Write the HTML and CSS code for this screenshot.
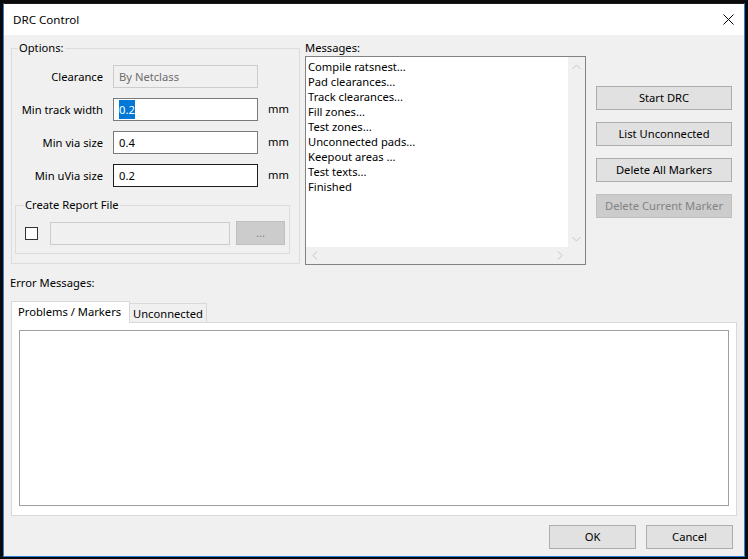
FILE: index.html
```html
<!DOCTYPE html>
<html lang="en">
<head>
    <meta charset="UTF-8">
    <title>DRC Control</title>
    <link rel="stylesheet" href="styles.css">
</head>
<body>
    <div class="window">
        <div class="titlebar">
            <span class="title">DRC Control</span>
            <svg class="close" width="11" height="11" viewBox="0 0 11 11">
                <path d="M0.5 0.5 L10.5 10.5 M10.5 0.5 L0.5 10.5" stroke="#000" stroke-width="1"/>
            </svg>
        </div>

        <div class="content">
            <div class="top">
                <!-- options box -->
                <fieldset class="group options">
                    <legend>Options:</legend>
                    <div class="opt-grid">
                        <div class="lbl">Clearance</div>
                        <div class="field disabled">By Netclass</div>
                        <div></div>

                        <div class="lbl">Min track width</div>
                        <div class="field"><span class="sel">0.2</span></div>
                        <div class="unit">mm</div>

                        <div class="lbl">Min via size</div>
                        <div class="field">0.4</div>
                        <div class="unit">mm</div>

                        <div class="lbl">Min uVia size</div>
                        <div class="field focus">0.2</div>
                        <div class="unit">mm</div>
                    </div>

                    <fieldset class="group report">
                        <legend>Create Report File</legend>
                        <div class="report-row">
                            <div class="check"></div>
                            <div class="field disabled path"></div>
                            <div class="btn disabled browse">...</div>
                        </div>
                    </fieldset>
                </fieldset>

                <!-- messages list -->
                <div class="messages">
                    <div class="msg-label">Messages:</div>
                    <div class="listbox">
                        <div class="list-main">
                            <div class="lines">
                                <div>Compile ratsnest...</div>
                                <div>Pad clearances...</div>
                                <div>Track clearances...</div>
                                <div>Fill zones...</div>
                                <div>Test zones...</div>
                                <div>Unconnected pads...</div>
                                <div>Keepout areas ...</div>
                                <div>Test texts...</div>
                                <div>Finished</div>
                            </div>
                            <div class="vscroll">
                                <svg width="9" height="6" viewBox="0 0 9 6"><path d="M0.5 5 L4.5 1 L8.5 5" fill="none" stroke="#c4c4c4"/></svg>
                                <svg width="9" height="6" viewBox="0 0 9 6"><path d="M0.5 1 L4.5 5 L8.5 1" fill="none" stroke="#c4c4c4"/></svg>
                            </div>
                        </div>
                        <div class="hscroll">
                            <svg width="6" height="9" viewBox="0 0 6 9"><path d="M5 0.5 L1 4.5 L5 8.5" fill="none" stroke="#c4c4c4"/></svg>
                            <svg width="6" height="9" viewBox="0 0 6 9"><path d="M1 0.5 L5 4.5 L1 8.5" fill="none" stroke="#c4c4c4"/></svg>
                            <div class="corner"></div>
                        </div>
                    </div>
                </div>

                <div class="actions">
                    <div class="btn">Start DRC</div>
                    <div class="btn">List Unconnected</div>
                    <div class="btn">Delete All Markers</div>
                    <div class="btn disabled">Delete Current Marker</div>
                </div>
            </div>

            <div class="err-label">Error Messages:</div>

            <div class="tabs">
                <div class="tab active">Problems / Markers</div>
                <div class="tab">Unconnected</div>
            </div>
            <div class="tab-panel">
                <div class="marker-list"></div>
            </div>

            <div class="footer">
                <div class="btn dlg">OK</div>
                <div class="btn dlg">Cancel</div>
            </div>
        </div>
    </div>
</body>
</html>
```
FILE: styles.css
```css
body {
    margin: 0;
    padding: 3px 0 0 3px;
    background-color: #0a0a0a;
    font-family: "Noto Sans", sans-serif;
    font-size: 11.2px;
    color: #000;
}

.window {
    width: 742px;
    height: 554px;
    box-sizing: border-box;
    border: 1px solid #2a7fd6;
    border-top-color: #1a1a1a;
    display: flex;
    flex-direction: column;
    background-color: #f0f0f0;
}

.titlebar {
    height: 31px;
    background-color: #fff;
    display: flex;
    align-items: center;
    justify-content: space-between;
    padding-left: 9px;
    flex-shrink: 0;
}

.title {
    font-size: 11.6px;
}

.close {
    margin-right: 10px;
}

.content {
    flex: 1;
    padding: 6px 7px 0 7px;
    display: flex;
    flex-direction: column;
}

.top {
    display: flex;
    align-items: flex-start;
}

/* group boxes */
.group {
    margin: 0;
    padding: 0;
    border: 1px solid #dcdcdc;
    box-sizing: border-box;
}

.group legend {
    padding: 0 1px;
    line-height: 14px;
}

.options {
    width: 289px;
}

.options > legend {
    margin-left: 6px;
}

.opt-grid {
    display: grid;
    grid-template-columns: 91px 145px auto;
    grid-auto-rows: 23px;
    column-gap: 10px;
    row-gap: 10px;
    margin-top: 10px;
}

.lbl {
    text-align: right;
    align-self: center;
}

.unit {
    align-self: start;
    margin-top: 3px;
}

.field {
    box-sizing: border-box;
    height: 23px;
    border: 1px solid #7a7a7a;
    background-color: #fff;
    padding: 0 5px;
    line-height: 21px;
}

.field.disabled {
    background-color: #f0f0f0;
    border-color: #cccccc;
    color: #6d6d6d;
}

.field.focus {
    border-color: #1e1e1e;
}

.sel {
    background-color: #0078d7;
    color: #fff;
    padding: 2px 0;
}

.report {
    margin: 11px 9px 9px 3px;
}

.report > legend {
    margin-left: 8px;
}

.report-row {
    display: flex;
    align-items: center;
    height: 24px;
    padding: 9px 0 8px 9px;
}

.check {
    width: 13px;
    height: 13px;
    box-sizing: border-box;
    border: 1px solid #333;
    background-color: #fff;
}

.path {
    width: 180px;
    margin-left: 12px;
}

.browse {
    width: 49px;
    margin-left: 6px;
    align-self: flex-start;
}

/* messages */
.messages {
    margin-left: 5px;
}

.msg-label {
    line-height: 14px;
    margin-bottom: 1px;
}

.listbox {
    width: 281px;
    height: 209px;
    box-sizing: border-box;
    border: 1px solid #828282;
    background-color: #fff;
    display: flex;
    flex-direction: column;
}

.list-main {
    flex: 1;
    display: flex;
}

.lines {
    flex: 1;
    padding: 2px 2px;
    line-height: 15px;
}

.vscroll {
    width: 17px;
    background-color: #f0f0f0;
    display: flex;
    flex-direction: column;
    justify-content: space-between;
    align-items: center;
    padding: 7px 0 5px;
}

.hscroll {
    height: 17px;
    background-color: #f0f0f0;
    display: flex;
    align-items: center;
    justify-content: space-between;
    padding-left: 6px;
}

.hscroll .corner {
    width: 17px;
    height: 17px;
    margin-left: 0;
}

.hscroll svg:nth-child(2) {
    margin-left: auto;
    margin-right: 5px;
}

/* buttons */
.actions {
    margin-left: 10px;
    margin-top: 45px;
    display: flex;
    flex-direction: column;
    gap: 12px;
    width: 136px;
}

.btn {
    height: 24px;
    box-sizing: border-box;
    border: 1px solid #adadad;
    background-color: #e1e1e1;
    text-align: center;
    line-height: 22px;
}

.btn.disabled {
    background-color: #cccccc;
    border-color: #bfbfbf;
    color: #838383;
}

/* error area */
.err-label {
    margin-top: 11px;
    margin-left: -1px;
    line-height: 14px;
}

.tabs {
    display: flex;
    align-items: flex-end;
    margin-top: 11px;
    margin-bottom: -1px;
    position: relative;
}

.tab {
    box-sizing: border-box;
    height: 20px;
    border: 1px solid #d9d9d9;
    background-color: #f0f0f0;
    padding: 0 3px;
    margin-left: -1px;
    line-height: 19px;
}

.tab.active {
    height: 22px;
    margin-left: 0;
    width: 119px;
    background-color: #fff;
    border-bottom: none;
    padding-left: 6px;
    line-height: 20px;
    position: relative;
    z-index: 1;
}

.tab-panel {
    height: 194px;
    box-sizing: border-box;
    border: 1px solid #d9d9d9;
    background-color: #fff;
    padding: 7px 7px 0 7px;
}

.marker-list {
    height: 176px;
    box-sizing: border-box;
    border: 1px solid #a0a0a0;
}

.footer {
    display: flex;
    justify-content: flex-end;
    gap: 10px;
    margin-top: 9px;
    margin-right: 4px;
}

.btn.dlg {
    width: 87px;
}
```
